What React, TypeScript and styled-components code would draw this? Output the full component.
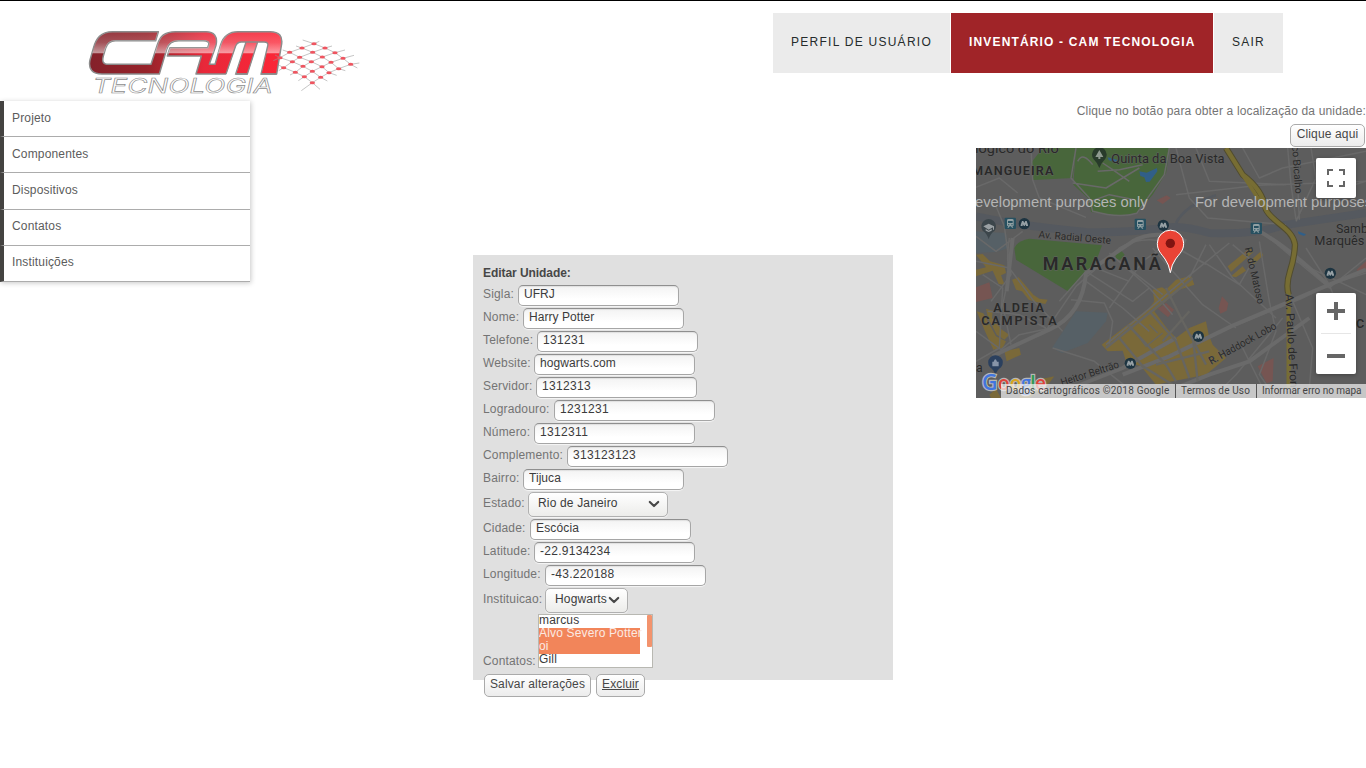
import React from 'react';
import styled, { createGlobalStyle } from 'styled-components';

const GlobalStyle = createGlobalStyle`
  * { box-sizing: border-box; }
  body {
    margin: 0;
    background: #fff;
    color: #747474;
    font: 12px/18px "Liberation Sans", Arial, sans-serif;
    letter-spacing: 0.16px;
    overflow: hidden;
  }
  input, button, select { font: inherit; }
`;

const Page = styled.div`
  height: 768px;
  border-top: 1px solid #000;
`;

const Header = styled.header`
  display: flex;
  justify-content: space-between;
  align-items: flex-start;
  height: 100px;
  padding: 12px 83px 0 80px;
`;

const LogoLink = styled.a`
  display: block;
  height: 80px;
  margin-top: 7px;
`;

const Nav = styled.nav`
  display: flex;
  gap: 1px;
`;

const NavItem = styled.a<{ $width: number; $active?: boolean }>`
  width: ${p => p.$width}px;
  height: 60px;
  padding-left: 18px;
  line-height: 58px;
  letter-spacing: ${p => (p.$active ? 1.16 : 1.26)}px;
  white-space: nowrap;
  background: ${p => (p.$active ? '#a02428' : '#ebebeb')};
  color: ${p => (p.$active ? '#fff' : '#252b2b')};
  font-weight: ${p => (p.$active ? 700 : 400)};
`;

const Main = styled.main`
  display: flex;
  align-items: flex-start;
`;

const SideMenu = styled.ul`
  width: 250px;
  margin: 0;
  padding: 0;
  list-style: none;
  box-shadow: 1px 1px 5px rgba(0, 0, 0, 0.22);
`;

const SideItem = styled.li<{ $tall?: boolean }>`
  height: ${p => (p.$tall ? 37 : 36)}px;
  padding-left: 8px;
  border-left: 4px solid #444341;
  border-bottom: 1px solid #acacac;
  line-height: 34px;
  color: #5c5c5c;

  &:nth-child(n + 4) { line-height: 32px; }
`;

const UnitForm = styled.form`
  width: 420px;
  height: 425px;
  margin: 154px 0 0 223px;
  padding: 9px 10px 0;
  background: #e0e0e0;
`;

const FormTitle = styled.h2`
  margin: 0;
  height: 20px;
  font-size: 12px;
  line-height: 18px;
  letter-spacing: -0.06px;
  color: #474747;
`;

const Row = styled.div<{ $height?: number }>`
  display: flex;
  align-items: flex-start;
  height: ${p => p.$height ?? 23}px;
  padding-top: 1px;
`;

const Label = styled.label<{ $width: number; $top?: number }>`
  flex: none;
  width: ${p => p.$width}px;
  padding-top: ${p => p.$top ?? 0}px;
  white-space: nowrap;
`;

const TextInput = styled.input<{ $spacing: number }>`
  width: 161px;
  height: 21px;
  padding: 0 5px 4px;
  border: 1px solid #a6a6a6;
  border-top-color: #8f8f8f;
  border-radius: 5px;
  outline: none;
  background: linear-gradient(#f3f3f3, #fff 70%);
  box-shadow: 0 1px 1px rgba(255, 255, 255, 0.7), inset 0 1px 1px rgba(0, 0, 0, 0.08);
  color: #3b3b3b;
  letter-spacing: ${p => p.$spacing}px;
`;

const SelectBox = styled.div<{ $width: number }>`
  display: flex;
  justify-content: space-between;
  width: ${p => p.$width}px;
  height: 25px;
  padding: 1px 7px 0 9px;
  border: 1px solid #b0b0b0;
  border-radius: 5px;
  background: linear-gradient(#fff, #ececea);
  box-shadow: 0 1px 1px rgba(255, 255, 255, 0.7);
  color: #3b3b3b;
  line-height: 18px;

  svg { flex: none; margin-top: 6px; }
`;

const ListBox = styled.div`
  display: flex;
  justify-content: space-between;
  width: 115px;
  height: 54px;
  border: 1px solid #b8b8b2;
  background: #fff;
  overflow: hidden;
`;

const Options = styled.div`
  width: 101px;
`;

const Option = styled.div<{ $selected?: boolean }>`
  height: 13px;
  line-height: 11px;
  white-space: nowrap;
  background: ${p => (p.$selected ? '#f2855a' : '#fff')};
  color: ${p => (p.$selected ? '#fbe9e2' : '#3b3b3b')};
`;

const ScrollThumb = styled.div`
  width: 5px;
  height: 32px;
  border-radius: 1px;
  background: #f3936d;
`;

const Actions = styled.div`
  display: flex;
  gap: 5px;
  padding: 5px 0 0 1px;
`;

const Button = styled.button<{ $width: number; $underline?: boolean }>`
  flex: none;
  width: ${p => p.$width}px;
  height: 23px;
  padding: 0 0 3px;
  border: 1px solid #aaa;
  border-radius: 5px;
  background: linear-gradient(#fff, #ececec);
  color: #474747;
  line-height: 18px;
  letter-spacing: 0.14px;
  white-space: nowrap;
  text-decoration: ${p => (p.$underline ? 'underline' : 'none')};
`;

const LocationPanel = styled.section`
  display: flex;
  flex-direction: column;
  align-items: flex-end;
  width: 390px;
  margin: 1px 0 0 83px;
  white-space: nowrap;

  ${Button} { margin: 4px 1px 1px 0; }
`;

const MapFrame = styled.div`
  position: relative;
  width: 390px;
  height: 250px;
  overflow: hidden;
  letter-spacing: 0;
`;

const MapControl = styled.div<{ $top: number; $height: number }>`
  position: absolute;
  right: 10px;
  top: ${p => p.$top}px;
  width: 40px;
  height: ${p => p.$height}px;
  border-radius: 2px;
  background: #fff;
  box-shadow: 0 1px 4px rgba(0, 0, 0, 0.3);

  svg { display: block; }
`;

const MapCredits = styled.div`
  position: absolute;
  right: 0;
  bottom: 0;
  display: flex;
  height: 14px;
  background: rgba(245, 245, 245, 0.7);
  color: #444;
  font: 10px/14px Roboto, sans-serif;
`;

const Credit = styled.span<{ $width: number; $spacing?: number }>`
  width: ${p => p.$width}px;
  padding-left: 5px;
  letter-spacing: ${p => p.$spacing ?? 0}px;

  & + & { border-left: 1px solid #555; }
`;

const nodes = [
  [702, 71], [666, 84], [735, 84], [629, 97], [698, 97], [765, 98], [600, 113], [659, 112], [727, 111], [789, 115],
  [637, 125], [694, 125], [753, 127], [812, 133], [611, 143], [669, 139], [726, 140], [776, 146], [646, 157], [697, 154],
  [747, 158], [673, 170], [722, 172], [697, 188],
];

const meshLines = [
  'M668 60L702 71L735 84L765 98L789 115L812 133L832 144', 'M648 78L666 84L698 97L727 111L753 127L776 146L796 152',
  'M608 90L629 97L659 112L694 125L726 140L747 158L770 166', 'M585 105L600 113L637 125L669 139L697 154L722 172L742 183',
  'M596 135L611 143L646 157L673 170L697 188L720 208',
  'M718 64L702 71L666 84L629 97L600 113L580 122', 'M756 78L735 84L698 97L659 112L637 125L611 143L596 152',
  'M795 90L765 98L727 111L694 125L669 139L646 157L630 165', 'M822 106L789 115L753 127L726 140L697 154L673 170L655 182',
  'M838 129L812 133L776 146L747 158L722 172L697 188L664 212',
];

function Logo() {
  return (
    <svg width="290" height="80" viewBox="0 0 870 240">
      <defs>
        <linearGradient id="red" gradientUnits="userSpaceOnUse" x1="30" y1="0" x2="600" y2="0">
          <stop offset="0" stopColor="#84212a" />
          <stop offset="0.3" stopColor="#96232a" />
          <stop offset="0.6" stopColor="#e8283a" />
          <stop offset="1" stopColor="#fb2637" />
        </linearGradient>
        <linearGradient id="gloss" gradientUnits="userSpaceOnUse" x1="0" y1="35" x2="0" y2="100">
          <stop offset="0" stopColor="#fff" stopOpacity="0.1" />
          <stop offset="0.5" stopColor="#fff" stopOpacity="0.22" />
          <stop offset="1" stopColor="#fff" stopOpacity="0.55" />
        </linearGradient>
      </defs>
      <path
        d="M235 35H98C62 35 48 55 40 85L30 120C24 148 38 162 66 162H238L260 88C265 70 275 62 296 62H370C384 62 388 68 386 74L383 83H270L262 108H364L348 162H590L604 77C610 48 597 35 570 35H474C445 35 430 49 422 74L405 133H388L408 76C414 49 402 35 378 35H287C252 35 240 50 232 74L213 133H86C68 133 66 123 70 108L77 84C82 68 90 62 106 62H227Z"
        fill="url(#red)" stroke="#8b8b8b" strokeWidth="4.5" strokeLinejoin="round"
      />
      <path
        d="M235 37H98C62 37 50 55 42 85L37 100H71L77 84C82 68 90 62 106 62H227ZM224 100L232 76C240 50 252 37 287 37H378C402 37 412 49 406 76L399 100H264L270 83H383L386 74C388 68 384 62 370 62H296C275 62 265 70 260 88L256 100ZM414 100L422 74C430 49 445 37 474 37H570C597 37 608 48 602 77L598 100Z"
        fill="url(#gloss)"
      />
      <path d="M438 165L467 78Q472 66 484 66H498L467 165Z" fill="#fff" />
      <path d="M502 165L533 66H552Q566 66 563 78L543 165Z" fill="#fff" />
      <path d="M438 162L467 78Q472 66 484 66H533L502 162H467L498 66M533 66H552Q566 66 563 78L543 162H590" fill="none" stroke="#8b8b8b" strokeWidth="4" />
      <g fill="none" stroke="#999" strokeWidth="1.7">{meshLines.map(d => <path key={d} d={d} />)}</g>
      <g fill="#ee5560">{nodes.map(([x, y]) => <ellipse key={`${x}-${y}`} cx={x} cy={y} rx="8" ry="4.500" />)}</g>
      <text x="38" y="220" textLength="540" lengthAdjust="spacingAndGlyphs" fontFamily="Inter, sans-serif" fontSize="61" fontStyle="italic" fill="#fff" stroke="#8d8d8d" strokeWidth="1.8">TECNOLOGIA</text>
    </svg>
  );
}

function Chevron() {
  return (
    <svg width="12" height="9" viewBox="0 0 12 9">
      <path d="M1.8 2L6 6L10.2 2" fill="none" stroke="#484848" strokeWidth="2.2" strokeLinecap="round" strokeLinejoin="round" />
    </svg>
  );
}

type MapLabelProps = {
  x: number;
  y: number;
  size: number;
  length: number;
  rotate?: number;
  bold?: boolean;
  children: string;
};

function MapLabel({ x, y, size, length, rotate = 0, bold, children }: MapLabelProps) {
  return (
    <text
      transform={`translate(${x} ${y}) rotate(${rotate})`}
      fontSize={size}
      fontWeight={bold ? 600 : 400}
      textLength={length}
      lengthAdjust={bold ? 'spacing' : 'spacingAndGlyphs'}
    >
      {children}
    </text>
  );
}

const metros = [[145, 227], [562, 232], [667, 565], [463, 646], [1063, 376]];
const trains = [[103, 226], [493, 229], [841, 241]];

const MapDrawing = styled.svg`
  display: block;
`;

function CityMap() {
  return (
    <MapDrawing width="390" height="250" viewBox="0 0 1170 750" fontFamily="Roboto, sans-serif">
      <rect width="1170" height="750" fill="#5d5d5d" />
      <g fill="#48663b">
        <path d="M200 0H300L290 90L172 96L165 45Z" />
        <path d="M300 0H582L570 75L530 140L482 196L430 203L345 192L335 150L292 110Z" />
        <path d="M115 300Q125 278 160 272L378 292L360 340L278 431L120 335Z" />
        <path d="M418 318L434 307L446 320L432 336L420 332Z" />
      </g>
      <g fill="#566066">
        <path d="M0 250L90 255L98 300L60 312L0 315Z" />
        <path d="M300 490L395 494L390 520L335 585L258 615L228 600Z" />
      </g>
      <path d="M490 70L512 74L543 60L544 70L521 101L510 102L505 88L493 84Z" fill="#315f88" />
      <path d="M395 28L425 36L418 44L398 36ZM966 250L990 259L984 264L968 258Z" fill="#315f88" />
      <path d="M0 418L40 403L50 450L0 462ZM738 445L757 466L752 488L733 497L728 480ZM845 655L893 630L890 700L872 706ZM542 157L572 142L584 150L560 168ZM1142 365L1170 340V370L1152 378Z" fill="#765552" />
      <g fill="#7a6939">
        <path d="M0 320L20 318L42 340L85 352L90 375L75 382L86 410L68 408L50 368L0 385V365L30 358Z" />
        <path d="M108 395L128 388L172 440L190 452L215 455L208 468L180 462L158 455L138 430L120 425Z" />
        <path d="M2 490L22 496L60 565L90 580L80 600L52 605L25 545ZM30 482L50 488L48 510L78 545L100 560L85 575L62 560L36 510ZM85 610L130 600L135 620L92 640Z" />
        <path d="M377 590L520 480L535 460L530 425L558 418L570 425L600 395L645 383L655 410L610 425L535 490L572 540L600 570L640 540L690 520L698 560L710 590L750 630L690 680L590 700L540 710L495 655L450 640L440 608L395 610Z" />
        <path d="M755 355L822 300L832 312L765 372ZM765 385L800 355L810 368L780 388ZM815 345L855 310L862 322L830 352Z" />
        <path d="M40 740L60 722L75 750H45ZM140 705L235 685L220 705L160 750H130Z" />
      </g>
      <path d="M545 482L570 465L594 485L576 508Z" fill="#765552" />
      <g fill="none" stroke="#55595f">
        <path d="M0 205Q140 235 330 252Q450 256 580 238Q620 232 700 255Q850 260 920 232L1170 195" strokeWidth="24" />
        <path d="M600 225Q630 170 720 142" strokeWidth="8" />
      </g>
      <g fill="none" stroke="#696969" strokeWidth="4.5" strokeLinejoin="round">
        <path d="M0 118L70 90L125 135M165 0L170 95L190 150L330 208M300 0L285 90L340 150L350 190Q430 212 482 196L565 80L580 0M305 40Q320 10 350 50M290 105L390 120L490 60M380 45L410 65L460 100M330 165L400 140L475 155M365 70L430 65L500 50M0 265L60 310L140 250M60 175L85 235L105 380L45 460M0 340L100 360L170 455L260 550M20 380L80 420L70 600L0 640M35 490L130 500L210 540M0 550L75 605L130 560L225 540" />
        <path d="M80 610L205 555L300 415L430 300Q500 260 580 285L690 350M100 270Q90 340 100 380L80 470L105 590M250 460L330 370L470 460L520 420M330 400L440 480L520 550M285 455L385 465L410 520L400 590M360 360L460 400M230 600L355 640L480 740M400 315L520 420L590 500M530 300L590 370L680 470L780 540M390 590L600 415L760 285M400 480L500 340L570 290M430 340L560 440M600 300L695 350L790 410L830 340L770 290M700 290L770 390L900 510M640 390L690 290" />
        <path d="M600 0L640 150L695 210L930 230M600 140L850 112L1170 100M660 0L700 100L930 110M800 0L850 90L920 60L1170 10M935 0L945 110L960 215M960 0L970 215M1005 0L1020 90L960 220M1040 140L1170 100M850 280L880 460L900 550L850 680L900 750M880 270L1060 420L1170 330M960 340L1170 440M950 460L1010 600L1000 720M760 540L980 450L1060 410L1170 375M920 510L780 680L720 740M800 600L860 720M990 300L1060 410L1110 540" />
      </g>
      <g fill="none" stroke="#6a6a6a" strokeWidth="12">
        <path d="M110 270L92 430M50 625Q120 590 220 545T330 375L470 280Q540 240 630 280M440 680L580 625L765 535L1060 410L1170 365M250 735L440 660L600 570M600 720L700 680L820 640L1000 510M850 250Q940 300 1060 415" />
      </g>
      <g fill="none" stroke="#666561" strokeWidth="7">
        <path d="M430 570L500 655L590 710M455 530L570 650L600 700M520 490L600 580L640 690M570 420L620 520L690 650M390 600L650 390M540 650L700 610M650 560L665 700M560 580L640 490" />
        <path d="M480 555L510 595L560 555M520 530L545 555" strokeWidth="4" />
      </g>
      <path d="M750 0L800 80Q860 125 870 185C890 225 950 240 957 290Q955 330 942 370T938 440" fill="none" stroke="#514c2f" strokeWidth="19" />
      <path d="M750 0L800 80Q860 125 870 185C890 225 950 240 957 290Q955 330 942 370T938 440V720" fill="none" stroke="#776d33" strokeWidth="13" />
      <path d="M800 80L842 145L870 185" fill="none" stroke="#776d33" strokeWidth="11" />
      <g fill="#292929" stroke="#646464" strokeWidth="2.4" paintOrder="stroke">
        <MapLabel x={-28} y={16} size={37} length={276}>ológico do Rio</MapLabel>
        <MapLabel x={406} y={46} size={37} length={340}>Quinta da Boa Vista</MapLabel>
        <MapLabel x={-12} y={80} size={38} length={244} bold>MANGUEIRA</MapLabel>
        <MapLabel x={200} y={366} size={54} length={354} bold>MARACANÃ</MapLabel>
        <MapLabel x={52} y={493} size={38} length={152} bold>ALDEIA</MapLabel>
        <MapLabel x={16} y={532} size={38} length={226} bold>CAMPISTA</MapLabel>
        <MapLabel x={187} y={269} rotate={5} size={31} length={218}>Av. Radial Oeste</MapLabel>
        <MapLabel x={948} y={-6} rotate={86} size={31} length={144}>co Bicalho</MapLabel>
        <MapLabel x={806} y={300} rotate={77} size={31} length={174}>R. do Matoso</MapLabel>
        <MapLabel x={928} y={438} rotate={87} size={35} length={282}>Av. Paulo de Fron</MapLabel>
        <MapLabel x={706} y={650} rotate={-29} size={32} length={226}>R. Haddock Lobo</MapLabel>
        <MapLabel x={258} y={714} rotate={-18} size={31} length={182}>Heitor Beltrão</MapLabel>
        <MapLabel x={1080} y={254} size={39} length={116}>Samba</MapLabel>
        <MapLabel x={1015} y={292} size={39} length={150}>Marquês</MapLabel>
        <MapLabel x={1140} y={540} size={38} length={25} bold>C</MapLabel>
        <MapLabel x={0} y={671} size={36} length={20}>a</MapLabel>
      </g>
      <g fontFamily="Liberation Sans, sans-serif" fontSize="45" fill="#b4b4b4">
        <text x="-3" y="178" textLength="518" lengthAdjust="spacingAndGlyphs">evelopment purposes only</text>
        <text x="657" y="178" textLength="532" lengthAdjust="spacingAndGlyphs">For development purposes</text>
      </g>
      {trains.map(([x, y]) => (
        <g key={x} transform={`translate(${x} ${y})`}>
          <rect x="-17" y="-17" width="34" height="34" rx="3" fill="#275060" />
          <path d="M-10 -9Q-10 -13 -5 -13H5Q10 -13 10 -9V6Q10 9 6 9L9 13H5L2 9H-2L-5 13H-9L-6 9Q-10 9 -10 6ZM-7 -7V-1H7V-7ZM-7 3H-3V6H-7ZM3 3H7V6H3Z" fill="#91a0a3" fillRule="evenodd" />
        </g>
      ))}
      {metros.map(([x, y]) => (
        <g key={x} transform={`translate(${x} ${y})`}>
          <circle r="17" fill="#1d3441" />
          <path d="M-11 7V4L-7 -8H-3L0 -2L3 -8H7L11 4V7H5V2L1 7H-1L-5 2V7Z" fill="#96a0a5" />
        </g>
      ))}
      <path d="M370 60Q363 43 353 34A22 22 0 1 1 387 34Q377 43 370 60Z" fill="#283b2b" />
      <path d="M370 6L358 27H367V33H373V27H382Z" fill="#8e9a8f" />
      <path d="M38 274Q33 256 20 248A22 22 0 1 1 56 248Q43 256 38 274Z" fill="#3c464b" />
      <path d="M22 235L38 227L54 235V245H51V238L38 245ZM29 243L38 248L47 243V248L38 252L29 248Z" fill="#9aa0a3" />
      <path d="M58 683Q54 665 42 658A22 22 0 1 1 75 658Q63 665 58 683Z" fill="#2b405e" />
      <path d="M49 641H53Q58 627 63 641H68V655H49Z" fill="#8794a8" />
      <g fontSize="57" fontWeight="600" fontFamily="Open Sans, sans-serif" stroke="#b7b7b7" strokeWidth="7" paintOrder="stroke">
        <text x="18" y="727" fontSize="64" fontWeight="600" fill="#4175df">G</text>
        <text x="66" y="727" fill="#df4238">o</text>
        <text x="101" y="727" fill="#d9a51d">o</text>
        <text x="135" y="727" fill="#4175df">g</text>
        <text x="163" y="727" fill="#2d9b50">l</text>
        <text x="177" y="727" fill="#df4238">e</text>
      </g>
      <path d="M583 374Q579 349 567 333C555 316 544 308 544 286A39.500 39.500 0 0 1 623 286C623 308 611 316 599 333Q587 349 583 374Z" fill="#ea4335" stroke="#fff" strokeWidth="3" />
      <circle cx="583" cy="286" r="14" fill="#811411" />
    </MapDrawing>
  );
}

type FieldProps = { label: string; width: number; value: string; spacing?: number };

function Field({ label, width, value, spacing = 0.05 }: FieldProps) {
  return (
    <Row>
      <Label $width={width}>{label}</Label>
      <TextInput defaultValue={value} $spacing={spacing} />
    </Row>
  );
}

const fields: FieldProps[] = [
  { label: 'Sigla:', width: 35, value: 'UFRJ' },
  { label: 'Nome:', width: 40, value: 'Harry Potter' },
  { label: 'Telefone:', width: 54, value: '131231', spacing: 0.33 },
  { label: 'Website:', width: 51, value: 'hogwarts.com', spacing: 0.1 },
  { label: 'Servidor:', width: 53, value: '1312313', spacing: 0.33 },
  { label: 'Logradouro:', width: 71, value: '1231231', spacing: 0.33 },
  { label: 'Número:', width: 51, value: '1312311', spacing: 0.33 },
  { label: 'Complemento:', width: 84, value: '313123123', spacing: 0.33 },
  { label: 'Bairro:', width: 40, value: 'Tijuca' },
];

const placeFields: FieldProps[] = [
  { label: 'Cidade:', width: 47, value: 'Escócia', spacing: 0.14 },
  { label: 'Latitude:', width: 51, value: '-22.9134234', spacing: 0.28 },
  { label: 'Longitude:', width: 62, value: '-43.220188', spacing: 0.28 },
];

export default function App() {
  return (
    <Page>
      <GlobalStyle />
      <Header>
        <LogoLink><Logo /></LogoLink>
        <Nav>
          <NavItem $width={177}>PERFIL DE USUÁRIO</NavItem>
          <NavItem $width={262} $active>INVENTÁRIO - CAM TECNOLOGIA</NavItem>
          <NavItem $width={69}>SAIR</NavItem>
        </Nav>
      </Header>
      <Main>
        <SideMenu>
          <SideItem>Projeto</SideItem>
          <SideItem>Componentes</SideItem>
          <SideItem $tall>Dispositivos</SideItem>
          <SideItem>Contatos</SideItem>
          <SideItem>Instituições</SideItem>
        </SideMenu>
        <UnitForm>
          <FormTitle>Editar Unidade:</FormTitle>
          {fields.map(f => <Field key={f.label} {...f} />)}
          <Row $height={27}>
            <Label $width={45} $top={2}>Estado:</Label>
            <SelectBox $width={140}>Rio de Janeiro<Chevron /></SelectBox>
          </Row>
          {placeFields.map(f => <Field key={f.label} {...f} />)}
          <Row $height={26}>
            <Label $width={62} $top={2}>Instituicao:</Label>
            <SelectBox $width={83}>Hogwarts<Chevron /></SelectBox>
          </Row>
          <Row $height={56}>
            <Label $width={55} $top={38}>Contatos:</Label>
            <ListBox>
              <Options>
                <Option>marcus</Option>
                <Option $selected>Alvo Severo Potter</Option>
                <Option $selected>oi</Option>
                <Option>Gill</Option>
              </Options>
              <ScrollThumb />
            </ListBox>
          </Row>
          <Actions>
            <Button type="button" $width={107}>Salvar alterações</Button>
            <Button type="button" $width={49} $underline>Excluir</Button>
          </Actions>
        </UnitForm>
        <LocationPanel>
          Clique no botão para obter a localização da unidade:
          <Button type="button" $width={75}>Clique aqui</Button>
          <MapFrame>
            <CityMap />
            <MapControl $top={10} $height={40}>
              <svg width="40" height="40" viewBox="0 0 40 40">
                <path d="M12 17V12H17M23 12H28V17M28 23V28H23M17 28H12V23" fill="none" stroke="#666" strokeWidth="2" />
              </svg>
            </MapControl>
            <MapControl $top={145} $height={81}>
              <svg width="40" height="81" viewBox="0 0 40 81">
                <path d="M11 18H29M20 9V27M11 63H29" stroke="#666" strokeWidth="4" />
                <path d="M5 40.500H35" stroke="#e6e6e6" />
              </svg>
            </MapControl>
            <MapCredits>
              <Credit $width={174} $spacing={0.19}>Dados cartográficos ©2018 Google</Credit>
              <Credit $width={81} $spacing={0.15}>Termos de Uso</Credit>
              <Credit $width={110} $spacing={-0.03}>Informar erro no mapa</Credit>
            </MapCredits>
          </MapFrame>
        </LocationPanel>
      </Main>
    </Page>
  );
}
